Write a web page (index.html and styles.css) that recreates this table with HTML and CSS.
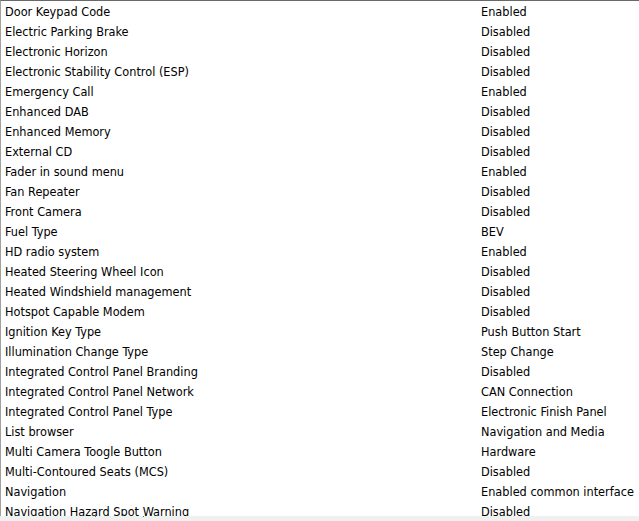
FILE: index.html
```html
<!DOCTYPE html>
<html>
<head>
<meta charset="utf-8">
<link rel="stylesheet" href="styles.css">
</head>
<body>
<div class="frame">
  <div class="list">
    <div class="row"><span class="name">Door Keypad Code</span><span class="val">Enabled</span></div>
    <div class="row"><span class="name">Electric Parking Brake</span><span class="val">Disabled</span></div>
    <div class="row"><span class="name">Electronic Horizon</span><span class="val">Disabled</span></div>
    <div class="row"><span class="name">Electronic Stability Control (ESP)</span><span class="val">Disabled</span></div>
    <div class="row"><span class="name">Emergency Call</span><span class="val">Enabled</span></div>
    <div class="row"><span class="name">Enhanced DAB</span><span class="val">Disabled</span></div>
    <div class="row"><span class="name">Enhanced Memory</span><span class="val">Disabled</span></div>
    <div class="row"><span class="name">External CD</span><span class="val">Disabled</span></div>
    <div class="row"><span class="name">Fader in sound menu</span><span class="val">Enabled</span></div>
    <div class="row"><span class="name">Fan Repeater</span><span class="val">Disabled</span></div>
    <div class="row"><span class="name">Front Camera</span><span class="val">Disabled</span></div>
    <div class="row"><span class="name">Fuel Type</span><span class="val">BEV</span></div>
    <div class="row"><span class="name">HD radio system</span><span class="val">Enabled</span></div>
    <div class="row"><span class="name">Heated Steering Wheel Icon</span><span class="val">Disabled</span></div>
    <div class="row"><span class="name">Heated Windshield management</span><span class="val">Disabled</span></div>
    <div class="row"><span class="name">Hotspot Capable Modem</span><span class="val">Disabled</span></div>
    <div class="row"><span class="name">Ignition Key Type</span><span class="val">Push Button Start</span></div>
    <div class="row"><span class="name">Illumination Change Type</span><span class="val">Step Change</span></div>
    <div class="row"><span class="name">Integrated Control Panel Branding</span><span class="val">Disabled</span></div>
    <div class="row"><span class="name">Integrated Control Panel Network</span><span class="val">CAN Connection</span></div>
    <div class="row"><span class="name">Integrated Control Panel Type</span><span class="val">Electronic Finish Panel</span></div>
    <div class="row"><span class="name">List browser</span><span class="val">Navigation and Media</span></div>
    <div class="row"><span class="name">Multi Camera Toogle Button</span><span class="val">Hardware</span></div>
    <div class="row"><span class="name">Multi-Contoured Seats (MCS)</span><span class="val">Disabled</span></div>
    <div class="row"><span class="name">Navigation</span><span class="val">Enabled common interface</span></div>
    <div class="row"><span class="name">Navigation Hazard Spot Warning</span><span class="val">Disabled</span></div>
  </div>
</div>
<div class="hscroll"><span class="tick t1"></span><span class="tick t2"></span></div>
</body>
</html>
```
FILE: styles.css
```css
html, body {
  margin: 0;
  padding: 0;
  background: #ffffff;
  overflow: hidden;
}
body {
  width: 639px;
  height: 521px;
  font-family: "DejaVu Sans Condensed", "DejaVu Sans", sans-serif;
  font-size: 12.6px;
  color: #000000;
}
.frame {
  height: 515px;
  border-top: 1px solid #696969;
  border-left: 1px solid #a0a0a0;
  overflow: hidden;
}
.list {
  display: flex;
  flex-direction: column;
}
.row {
  display: grid;
  grid-template-columns: 476px 1fr;
  height: 20px;
  box-sizing: border-box;
  padding-top: 1px;
  line-height: 20px;
  padding-left: 4px;
  white-space: nowrap;
}
.hscroll {
  height: 5px;
  background: #f0f0f0;
  display: flex;
}
.tick {
  width: 1px;
  height: 1px;
  background: #606060;
}
.t1 { margin-left: 95px; }
.t2 { margin-left: 47px; }
```
